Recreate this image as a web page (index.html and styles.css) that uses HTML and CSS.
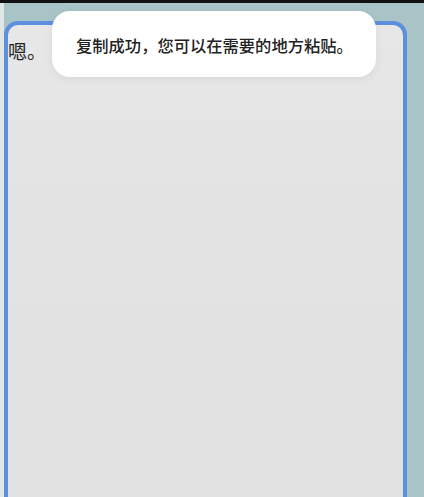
FILE: index.html
```html
<!DOCTYPE html>
<html lang="zh">
<head>
<meta charset="utf-8">
<link rel="stylesheet" href="styles.css">
</head>
<body>
<div class="topbar"></div>
<div class="stage">
  <div class="strip"></div>
  <div class="card">
    <p class="msg">嗯。</p>
  </div>
  <div class="gutter"></div>
</div>
<div class="toast">复制成功，您可以在需要的地方粘贴。</div>
</body>
</html>
```
FILE: styles.css
```css
html, body {
  margin: 0;
  padding: 0;
  height: 100%;
  overflow: hidden;
}
body {
  background: #a9c4c6;
  font-family: "Noto Sans CJK SC", "Noto Sans", sans-serif;
  text-spacing-trim: space-all;
  display: flex;
  flex-direction: column;
}
.topbar {
  height: 3px;
  background: #111;
  flex: none;
}
.stage {
  flex: 1;
  display: flex;
  padding-top: 18px;
  background: linear-gradient(to right, #dfe6e5 0, #dfe6e5 4px, transparent 4px);
}
.strip {
  width: 4px;
  flex: none;
}
.card {
  flex: 1;
  margin-bottom: -20px;
  background: linear-gradient(to bottom, #e7e7e7, #e3e3e3 40%, #e1e1e1);
  border: 4px solid #5c8fde;
  border-bottom: none;
  border-radius: 14px 14px 0 0;
  box-sizing: border-box;
}
.gutter {
  width: 17px;
  flex: none;
}
.msg {
  margin: 14px 0 0 0;
  font-size: 19px;
  line-height: 24px;
  color: #222;
}
.toast {
  position: absolute;
  left: 52px;
  top: 11px;
  width: 324px;
  height: 66px;
  box-sizing: border-box;
  background: #fff;
  border-radius: 18px;
  box-shadow: 0 2px 10px rgba(0,0,0,0.06);
  font-size: 16.3px;
  font-weight: 500;
  color: #222;
  display: flex;
  align-items: center;
  padding-left: 24px;
  padding-top: 1px;
}
```
